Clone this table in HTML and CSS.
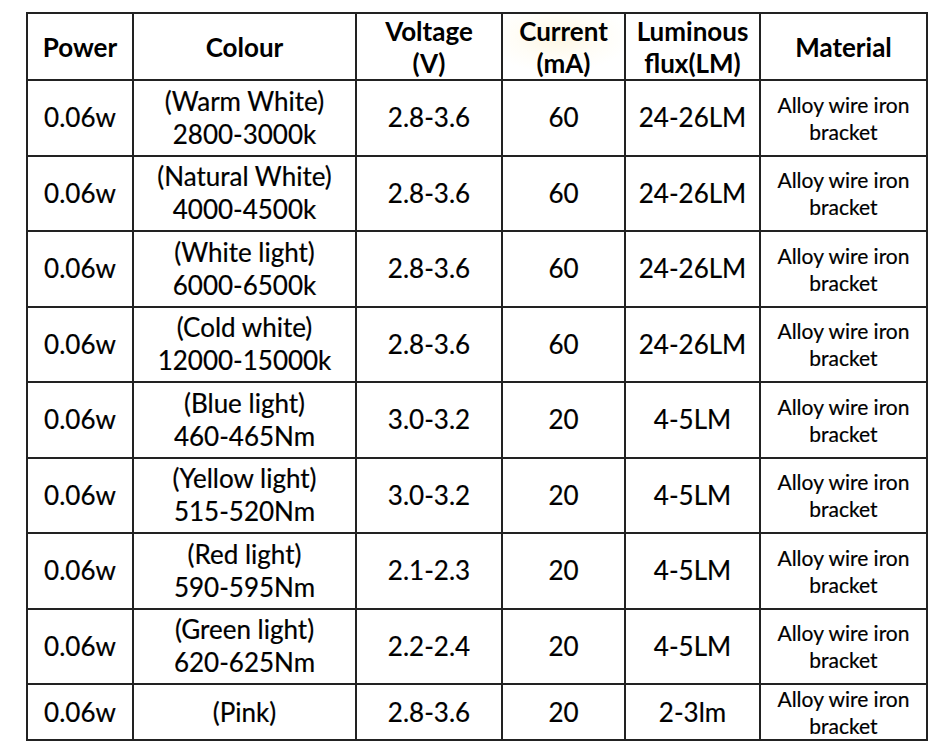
FILE: index.html
```html
<!DOCTYPE html>
<html lang="en">
<head>
<meta charset="utf-8">
<title>LED specification table</title>
<link rel="stylesheet" href="styles.css">
</head>
<body>
<main class="page">
<table class="spec">
  <colgroup>
    <col class="c-power">
    <col class="c-colour">
    <col class="c-volt">
    <col class="c-current">
    <col class="c-flux">
    <col class="c-material">
  </colgroup>
  <thead>
    <tr class="head">
      <th>Power</th>
      <th>Colour</th>
      <th>Voltage<br>(V)</th>
      <th class="glow">Current<br>(mA)</th>
      <th>Luminous<br>flux(LM)</th>
      <th>Material</th>
    </tr>
  </thead>
  <tbody>
    <tr class="row">
      <td>0.06w</td>
      <td class="two">(Warm White)<br>2800-3000k</td>
      <td>2.8-3.6</td>
      <td>60</td>
      <td>24-26LM</td>
      <td class="mat">Alloy wire iron<br>bracket</td>
    </tr>
    <tr class="row">
      <td>0.06w</td>
      <td class="two">(Natural White)<br>4000-4500k</td>
      <td>2.8-3.6</td>
      <td>60</td>
      <td>24-26LM</td>
      <td class="mat">Alloy wire iron<br>bracket</td>
    </tr>
    <tr class="row">
      <td>0.06w</td>
      <td class="two">(White light)<br>6000-6500k</td>
      <td>2.8-3.6</td>
      <td>60</td>
      <td>24-26LM</td>
      <td class="mat">Alloy wire iron<br>bracket</td>
    </tr>
    <tr class="row">
      <td>0.06w</td>
      <td class="two">(Cold white)<br>12000-15000k</td>
      <td>2.8-3.6</td>
      <td>60</td>
      <td>24-26LM</td>
      <td class="mat">Alloy wire iron<br>bracket</td>
    </tr>
    <tr class="row">
      <td>0.06w</td>
      <td class="two">(Blue light)<br>460-465Nm</td>
      <td>3.0-3.2</td>
      <td>20</td>
      <td>4-5LM</td>
      <td class="mat">Alloy wire iron<br>bracket</td>
    </tr>
    <tr class="row">
      <td>0.06w</td>
      <td class="two">(Yellow light)<br>515-520Nm</td>
      <td>3.0-3.2</td>
      <td>20</td>
      <td>4-5LM</td>
      <td class="mat">Alloy wire iron<br>bracket</td>
    </tr>
    <tr class="row">
      <td>0.06w</td>
      <td class="two">(Red light)<br>590-595Nm</td>
      <td>2.1-2.3</td>
      <td>20</td>
      <td>4-5LM</td>
      <td class="mat">Alloy wire iron<br>bracket</td>
    </tr>
    <tr class="row">
      <td>0.06w</td>
      <td class="two">(Green light)<br>620-625Nm</td>
      <td>2.2-2.4</td>
      <td>20</td>
      <td>4-5LM</td>
      <td class="mat">Alloy wire iron<br>bracket</td>
    </tr>
    <tr class="row last">
      <td>0.06w</td>
      <td class="two">(Pink)</td>
      <td>2.8-3.6</td>
      <td>20</td>
      <td>2-3lm</td>
      <td class="mat">Alloy wire iron<br>bracket</td>
    </tr>
  </tbody>
</table>
</main>
</body>
</html>
```

FILE: styles.css
```css
html, body {
  margin: 0;
  padding: 0;
  background: #ffffff;
}

.page {
  padding: 12px 0 0 26px;
}

.spec {
  border-collapse: collapse;
  table-layout: fixed;
  width: 902px;
  font-family: "Lato", "Open Sans", sans-serif;
  color: #000000;
  font-size: 26px;
  text-align: center;
}

.c-power { width: 106px; }
.c-colour { width: 223px; }
.c-volt { width: 146px; }
.c-current { width: 123px; }
.c-flux { width: 135px; }
.c-material { width: 167px; }

.spec th,
.spec td {
  border: 2px solid #222222;
  padding: 0;
  vertical-align: middle;
  overflow: visible;
  white-space: nowrap;
}

.head th {
  height: 65px;
  font-weight: 700;
  line-height: 32px;
  font-size: 26px;
}

.glow {
  background: radial-gradient(ellipse 60% 55% at 45% 35%, #fdf6e2 0%, #fffdf7 60%, #ffffff 100%);
}

.row td {
  height: 73.5px;
  line-height: 33px;
  -webkit-text-stroke: 0.2px #000000;
}

.row.last td {
  height: 52px;
}

.spec td.mat {
  font-size: 21px;
  line-height: 27px;
}
```
